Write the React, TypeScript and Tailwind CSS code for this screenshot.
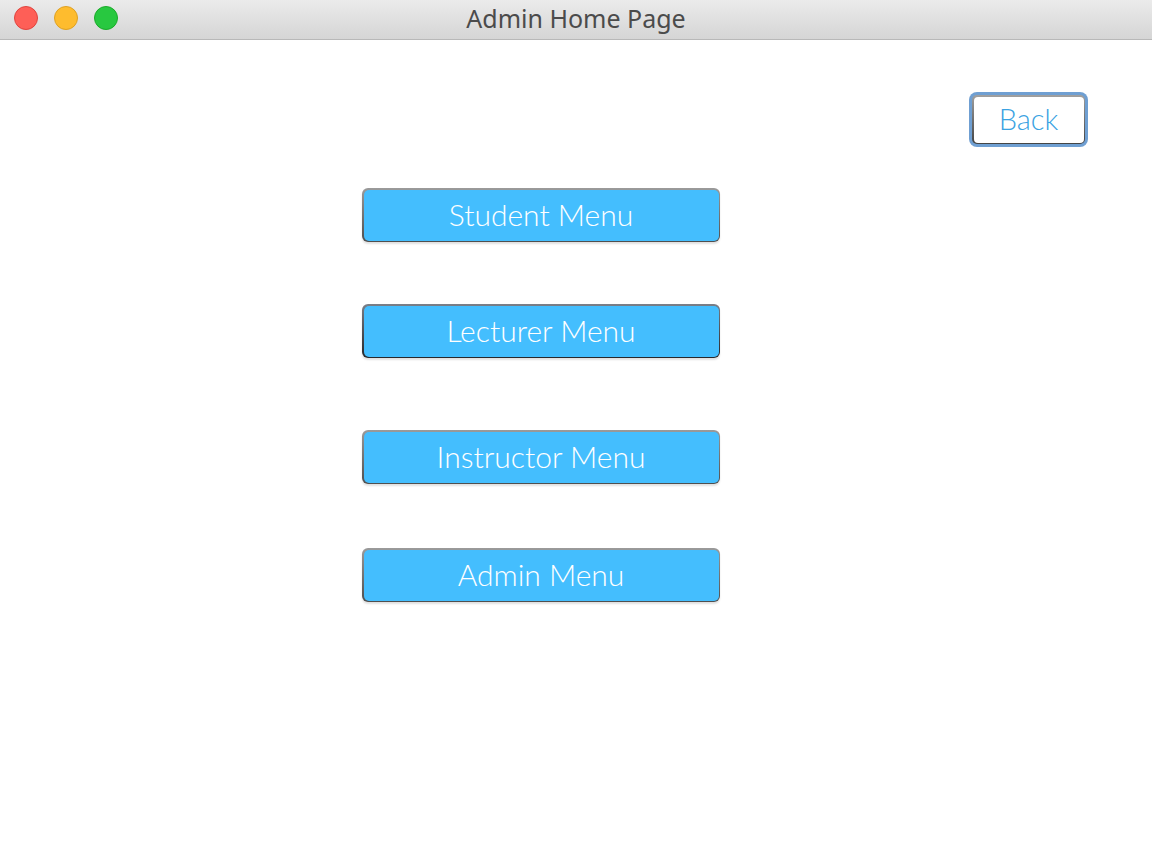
import React from 'react';

const menus = [
  { label: 'Student Menu', mt: 'mt-[42px]', bottom: 'from-[#9a9a9a] to-[#4f4f4f]' },
  { label: 'Lecturer Menu', mt: 'mt-[62px]', bottom: 'from-[#7a7f88] to-[#26282c]' },
  { label: 'Instructor Menu', mt: 'mt-[72px]', bottom: 'from-[#9a9a9a] to-[#4f4f4f]' },
  { label: 'Admin Menu', mt: 'mt-[64px]', bottom: 'from-[#9a9a9a] to-[#4f4f4f]' },
];

function TitleBar() {
  return (
    <div className="relative h-[40px] bg-gradient-to-b from-[#ebebeb] to-[#d5d5d5] border-b border-[#b8b8b8] flex items-center justify-center">
      <div className="absolute left-[14px] top-[6px] flex gap-[16px]">
        <span className="w-[24px] h-[24px] rounded-full bg-[#fe5f57] border border-[#e0443e]" />
        <span className="w-[24px] h-[24px] rounded-full bg-[#febc2e] border border-[#dea123]" />
        <span className="w-[24px] h-[24px] rounded-full bg-[#28c840] border border-[#1aab29]" />
      </div>
      <span className="text-[25px] text-[#4b4b4b] font-['Noto_Sans',sans-serif] leading-none pb-[2px]">Admin Home Page</span>
    </div>
  );
}

export default function App() {
  return (
    <div className="w-[1152px] h-[860px] bg-white font-['Lato',sans-serif] overflow-hidden">
      <TitleBar />
      <div className="flex justify-end pr-[64px] pt-[52px]">
        <button className="w-[119px] h-[55px] rounded-[8px] bg-[#6f9fd2] p-[3px]">
          <div className="w-full h-full rounded-[5px] bg-gradient-to-b from-[#a0a0a0] to-[#444] p-[1.5px]">
            <div className="w-full h-full rounded-[4px] bg-white flex items-center justify-center pb-[3px]">
              <span className="text-[29px] font-light text-[#3aa2e2] leading-none">Back</span>
            </div>
          </div>
        </button>
      </div>
      <div className="flex flex-col pl-[362px]">
        {menus.map((m, i) => (
          <button
            key={m.label}
            className={`${i === 0 ? 'mt-[41px]' : m.mt} w-[358px] h-[54px] rounded-[6px] bg-gradient-to-b ${m.bottom} p-[1.5px] shadow-[0_2px_2px_rgba(0,0,0,0.12)]`}
          >
            <div className="w-full h-full rounded-[5px] bg-[#44befe] flex items-center justify-center pb-[3px]">
              <span className="text-[30px] font-light text-white leading-none">{m.label}</span>
            </div>
          </button>
        ))}
      </div>
    </div>
  );
}
